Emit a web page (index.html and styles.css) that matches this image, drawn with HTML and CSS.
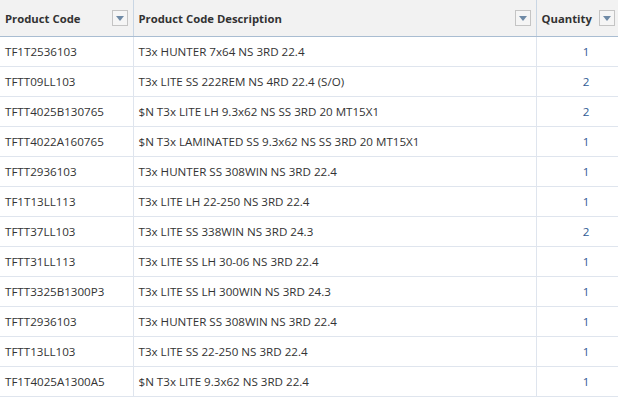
FILE: index.html
```html
<!DOCTYPE html>
<html>
<head>
<meta charset="utf-8">
<link rel="stylesheet" href="styles.css">
</head>
<body>
<table class="grid">
  <colgroup>
    <col class="c1"><col class="c2"><col class="c3">
  </colgroup>
  <thead>
    <tr>
      <th><div class="hd"><span>Product Code</span><span class="fbtn"><svg width="8" height="5" viewBox="0 0 8 5"><path d="M0 0H8L4 5Z" fill="#6f8aa6"/></svg></span></div></th>
      <th><div class="hd"><span>Product Code Description</span><span class="fbtn"><svg width="8" height="5" viewBox="0 0 8 5"><path d="M0 0H8L4 5Z" fill="#6f8aa6"/></svg></span></div></th>
      <th><div class="hd"><span>Quantity</span><span class="fbtn"><svg width="8" height="5" viewBox="0 0 8 5"><path d="M0 0H8L4 5Z" fill="#6f8aa6"/></svg></span></div></th>
    </tr>
  </thead>
  <tbody>
    <tr><td>TF1T2536103</td><td>T3x HUNTER 7x64 NS 3RD 22.4</td><td class="num">1</td></tr>
    <tr><td>TFTT09LL103</td><td>T3x LITE SS 222REM NS 4RD 22.4 (S/O)</td><td class="num">2</td></tr>
    <tr><td>TFTT4025B130765</td><td>$N T3x LITE LH 9.3x62 NS SS 3RD 20 MT15X1</td><td class="num">2</td></tr>
    <tr><td>TFTT4022A160765</td><td>$N T3x LAMINATED SS 9.3x62 NS SS 3RD 20 MT15X1</td><td class="num">1</td></tr>
    <tr><td>TFTT2936103</td><td>T3x HUNTER SS 308WIN NS 3RD 22.4</td><td class="num">1</td></tr>
    <tr><td>TF1T13LL113</td><td>T3x LITE LH 22-250 NS 3RD 22.4</td><td class="num">1</td></tr>
    <tr><td>TFTT37LL103</td><td>T3x LITE SS 338WIN NS 3RD 24.3</td><td class="num">2</td></tr>
    <tr><td>TFTT31LL113</td><td>T3x LITE SS LH 30-06 NS 3RD 22.4</td><td class="num">1</td></tr>
    <tr><td>TFTT3325B1300P3</td><td>T3x LITE SS LH 300WIN NS 3RD 24.3</td><td class="num">1</td></tr>
    <tr><td>TFTT2936103</td><td>T3x HUNTER SS 308WIN NS 3RD 22.4</td><td class="num">1</td></tr>
    <tr><td>TFTT13LL103</td><td>T3x LITE SS 22-250 NS 3RD 22.4</td><td class="num">1</td></tr>
    <tr><td>TF1T4025A1300A5</td><td>$N T3x LITE 9.3x62 NS 3RD 22.4</td><td class="num">1</td></tr>
  </tbody>
</table>
</body>
</html>
```
FILE: styles.css
```css
html, body {
  margin: 0;
  padding: 0;
  background: #ffffff;
  overflow: hidden;
}
.grid {
  border-collapse: collapse;
  table-layout: fixed;
  width: 640px;
  font-family: "Open Sans", "Noto Sans", sans-serif;
  font-size: 11.6px;
  color: #333333;
}
.c1 { width: 133px; }
.c2 { width: 403px; }
.c3 { width: 104px; }
.grid th {
  height: 36px;
  padding: 0 0 0 5px;
  background: #f2f2f2;
  border-bottom: 1px solid #a9bdd2;
  border-right: 1px solid #c9d6e4;
  text-align: left;
  font-weight: bold;
  font-size: 11.3px;
  color: #333333;
}
.hd {
  display: flex;
  align-items: center;
  justify-content: space-between;
  padding-right: 5px;
}
.grid th:last-child .hd {
  justify-content: flex-start;
  gap: 7px;
}
.fbtn {
  width: 14px;
  height: 14px;
  border: 1px solid #c4c4c4;
  background: #f5f5f5;
  display: flex;
  align-items: center;
  justify-content: center;
}
.grid td {
  height: 29px;
  padding: 0 0 0 5px;
  border-bottom: 1px solid #dfe5ee;
  border-right: 1px solid #dfe5ee;
  white-space: nowrap;
  overflow: hidden;
}
.grid td.num {
  text-align: right;
  padding-right: 50px;
  color: #2f5a94;
}
```
